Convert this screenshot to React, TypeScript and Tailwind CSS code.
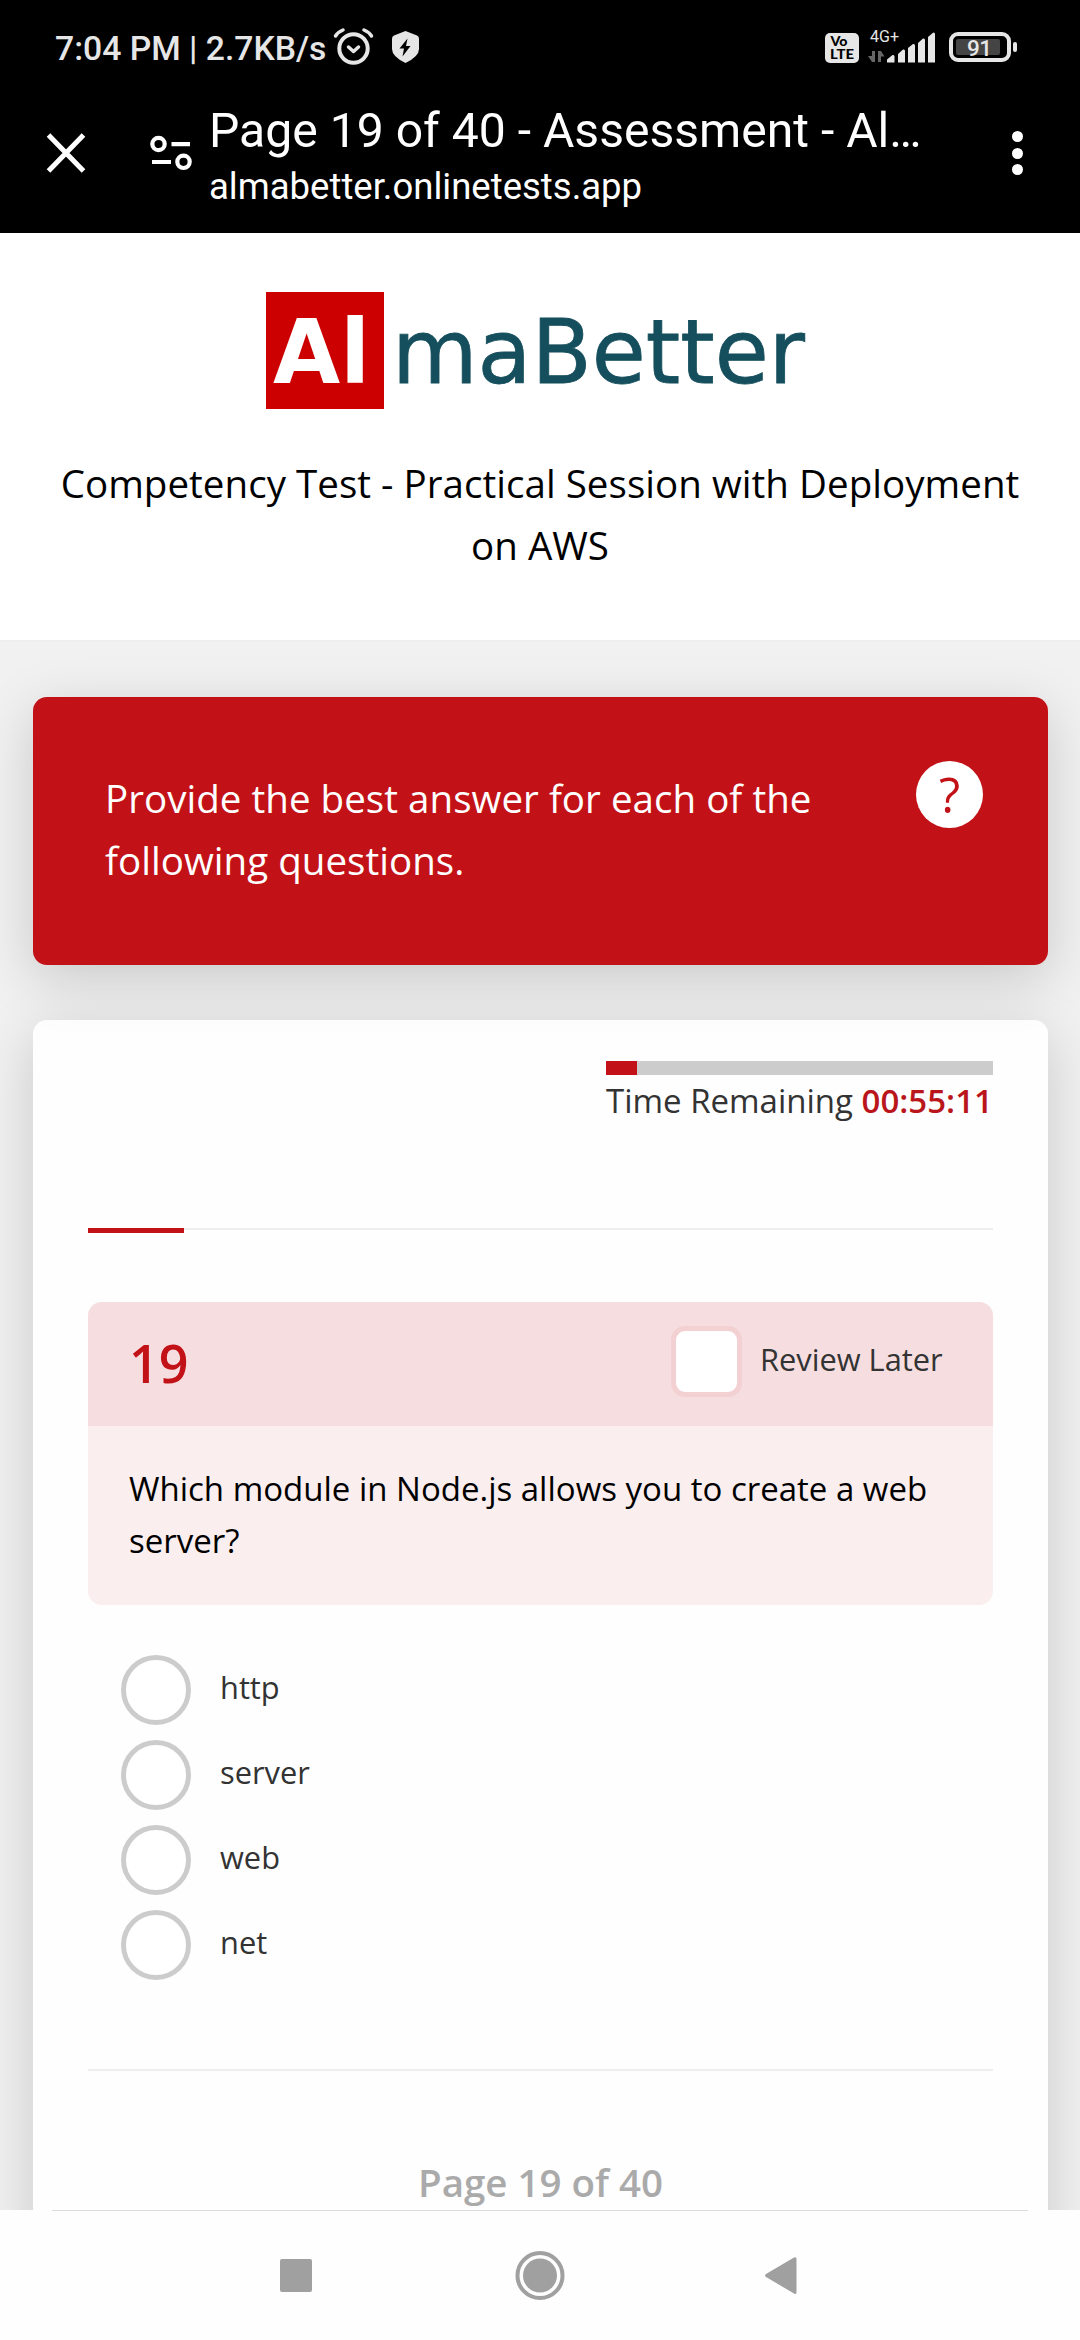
import React from "react";

const options = ["http", "server", "web", "net"];

function StatusBar() {
  return (
    <div className="flex h-[94px] items-center font-['Roboto'] text-[#e6e6e6]">
      <div className="mt-[3px] ml-[55px] w-[272px] text-[33.7px] leading-[40px] font-medium whitespace-nowrap">7:04 PM | 2.7KB/s</div>
      <svg className="ml-[6px] h-[40px] w-[41px]" viewBox="0 0 41 40" fill="none" stroke="#e6e6e6">
        <circle cx="20.5" cy="21.5" r="14.2" strokeWidth="4" />
        <path d="M2.500 9 Q5 5 10 3M38.500 9 Q36 5 31 3" strokeWidth="3.500" strokeLinecap="round" />
        <path d="M15.500 20l5 4.500 5-4.500" strokeWidth="3.500" strokeLinecap="round" strokeLinejoin="round" />
      </svg>
      <svg className="ml-[17px] h-[34px] w-[29px]" viewBox="0 0 29 34">
        <path d="M14.500 1L26 5.500Q28 6.300 28 8.500V19Q28 26.500 14.500 33Q1 26.500 1 19V8.500Q1 6.300 3 5.500Z" fill="#e6e6e6" />
        <path d="M16.500 8.500L8.500 18.500H13L11.500 26.500L19.500 16H15Z" fill="#000" />
      </svg>
      <svg className="ml-[405px] h-[60px] w-[194px] overflow-visible" viewBox="0 0 194 60" fill="#e6e6e6">
        <rect x="0" y="16" width="34" height="30" rx="5" />
        <g fontFamily="Lato" fontWeight="900" fontSize="13" fill="#000">
          <text x="5.500" y="29.200" textLength="17" lengthAdjust="spacingAndGlyphs">Vo</text>
          <text x="5" y="41.500" textLength="24" lengthAdjust="spacingAndGlyphs">LTE</text>
        </g>
        <text x="45" y="25" fontFamily="Roboto" fontSize="16.500" textLength="29" lengthAdjust="spacingAndGlyphs">4G+</text>
        <path d="M47 34V45H50V34ZM43 39H47V45ZM53 34V45H56V34ZM56 34L59.500 39.500H56Z" fill="#666" />
        <path d="M62 45.500V42.500L67.500 38Q69.500 37.500 69.500 39.500V45.500ZM73 45.500V37L78 32.500Q80 32 80 34V45.500ZM83 45.500V31L88 27Q90 26.500 90 28.500V45.500ZM93 45.500V26L98 21.500Q100 21 100 23V45.500ZM103 45.500V20L108 15.700Q110 15.200 110 17.200V45.500Z" />
        <rect x="126" y="17" width="58" height="26" rx="7" fill="none" stroke="#e6e6e6" strokeWidth="4" />
        <rect x="131" y="22" width="44" height="16" rx="2" fill="#444" />
        <rect x="188" y="25" width="4" height="10" rx="2" />
        <text x="142" y="38.500" fontFamily="Roboto" fontWeight="500" fontSize="22.500" textLength="25">91</text>
      </svg>
    </div>
  );
}

function BrowserBar() {
  return (
    <div className="flex h-[139px] font-['Roboto'] text-white">
      <svg className="mt-[39px] ml-[46px] h-[40px] w-[40px]" viewBox="0 0 40 40" stroke="#fff" strokeWidth="5">
        <path d="M2.500 2L37.500 38M37.500 2L2.500 38" />
      </svg>
      <svg className="mt-[41px] ml-[64px] h-[36px] w-[42px]" viewBox="0 0 42 36" fill="none" stroke="#fff" strokeWidth="4.200">
        <circle cx="8.500" cy="9" r="6.200" />
        <path d="M21.500 9.200H40M2 27H21" />
        <circle cx="33.500" cy="26.800" r="6.200" />
      </svg>
      <div className="ml-[17px] w-[760px]">
        <div className="mt-[8px] text-[48.1px] leading-[58px] whitespace-nowrap">Page 19 of 40 - Assessment - Al…</div>
        <div className="mt-[5px] text-[36.5px] leading-[44px] whitespace-nowrap">almabetter.onlinetests.app</div>
      </div>
      <div className="mt-[37px] ml-[43px] flex flex-col gap-[5.5px]">
        <i className="size-[11px] rounded-full bg-white" />
        <i className="size-[11px] rounded-full bg-white" />
        <i className="size-[11px] rounded-full bg-white" />
      </div>
    </div>
  );
}

function Logo() {
  return (
    <svg className="mx-auto block h-[117px] w-[548px] overflow-visible" viewBox="0 0 548 117" fontFamily="DejaVu Sans">
      <rect width="118" height="117" fill="#cc0000" />
      <text x="7" y="91" fontWeight="bold" fontSize="89" fill="#fff" textLength="97" lengthAdjust="spacingAndGlyphs">Al</text>
      <text x="126" y="91" fontSize="89" fill="#154e5c" stroke="#154e5c" strokeWidth="0.8" textLength="413" lengthAdjust="spacingAndGlyphs">maBetter</text>
    </svg>
  );
}

export default function App() {
  return (
    <div className="flex h-[2340px] w-[1080px] flex-col overflow-hidden bg-[#f1f1f1] font-['Open_Sans',sans-serif]">
      <div className="h-[233px] shrink-0 bg-black">
        <StatusBar />
        <BrowserBar />
      </div>
      <header className="h-[409px] shrink-0 border-b-2 border-[#eeeeee] bg-white pt-[59px]">
        <Logo />
        <h1 className="mt-[44px] text-center text-[38.5px] leading-[61.6px] tracking-[0.04px] text-black">
          Competency Test - Practical Session with Deployment
          <br />
          on AWS
        </h1>
      </header>
      <main className="h-[1568px] shrink-0 overflow-hidden px-[33px] pt-[55px]">
        <section className="relative z-10 flex h-[268px] w-[1015px] rounded-[14px] bg-[#c31217] shadow-[0_14px_55px_rgba(0,0,0,0.17)]">
          <p className="mt-[70px] ml-[72px] w-[760px] text-[38.5px] leading-[62px] tracking-[0.04px] text-white">
            Provide the best answer for each of the following questions.
          </p>
          <div className="mt-[64px] ml-[51px] flex size-[67px] items-center justify-center rounded-full bg-white text-[49px] leading-none font-medium text-[#c31217]">?</div>
        </section>
        <section className="mt-[55px] h-[1300px] w-[1015px] rounded-[14px] bg-[#fefefe] px-[55px] pt-[41px] shadow-[0_14px_55px_rgba(0,0,0,0.17)]">
          <div className="ml-auto h-[167px] w-[387px]">
            <div className="h-[14px] bg-[#cccccc]">
              <div className="h-full w-[31px] bg-[#c31217]" />
            </div>
            <div className="mt-[3px] text-[33px] leading-[46px] whitespace-nowrap text-[#333]">
              Time Remaining <b className="font-semibold text-[#b9151b]">00:55:11</b>
            </div>
          </div>
          <div className="h-[74px] border-t-2 border-[#eeeeee]">
            <div className="-mt-[2px] h-[5px] w-[96px] bg-[#c31217]" />
          </div>
          <div className="h-[303px] overflow-hidden rounded-[14px] bg-[#faeeee]">
            <div className="flex h-[124px] bg-[#f6dee0]">
              <span className="mt-[28px] ml-[41px] w-[542px] text-[52px] leading-[66px] font-semibold text-[#c31217]">19</span>
              <span className="mt-[24px] size-[71px] rounded-[14px] border-[5px] border-[#f3d0d2] bg-white" />
              <span className="mt-[37px] ml-[18px] text-[30.8px] leading-[41px] whitespace-nowrap text-[#333]">Review Later</span>
            </div>
            <p className="mt-[37px] ml-[41px] w-[820px] text-[33px] leading-[52.4px] text-black">
              Which module in Node.js allows you to create a web server?
            </p>
          </div>
          <div className="mt-[50px] ml-[33px] flex h-[412px] flex-col gap-[15px]">
            {options.map((option) => (
              <label key={option} className="flex h-[70px]">
                <span className="size-[70px] rounded-full border-[5px] border-[#cccccc] bg-white" />
                <span className="mt-[12px] ml-[29px] text-[30.8px] leading-[41px] text-[#333]">{option}</span>
              </label>
            ))}
          </div>
          <div className="mt-[2px] border-t-2 border-[#eeeeee] pt-[85px] text-center text-[38.5px] leading-[52px] font-semibold text-[#aaaaaa]">
            Page 19 of 40
          </div>
        </section>
      </main>
      <nav className="flex h-[130px] flex-col bg-[#fefefe]">
        <div className="mx-[52px] h-px bg-[#dddddd]" />
        <svg className="h-[129px] w-[1080px]" viewBox="0 2211 1080 129" fill="#a0a0a0">
          <rect x="280" y="2259" width="32" height="33" rx="2" />
          <circle cx="540" cy="2275.500" r="17" />
          <circle cx="540" cy="2275.500" r="22.500" fill="none" stroke="#a0a0a0" strokeWidth="4" />
          <path d="M766 2274L794 2257.500Q796.500 2256.500 796.500 2259V2292Q796.500 2295 794 2293.500L766 2277Q764 2275.500 766 2274Z" />
        </svg>
      </nav>
    </div>
  );
}
